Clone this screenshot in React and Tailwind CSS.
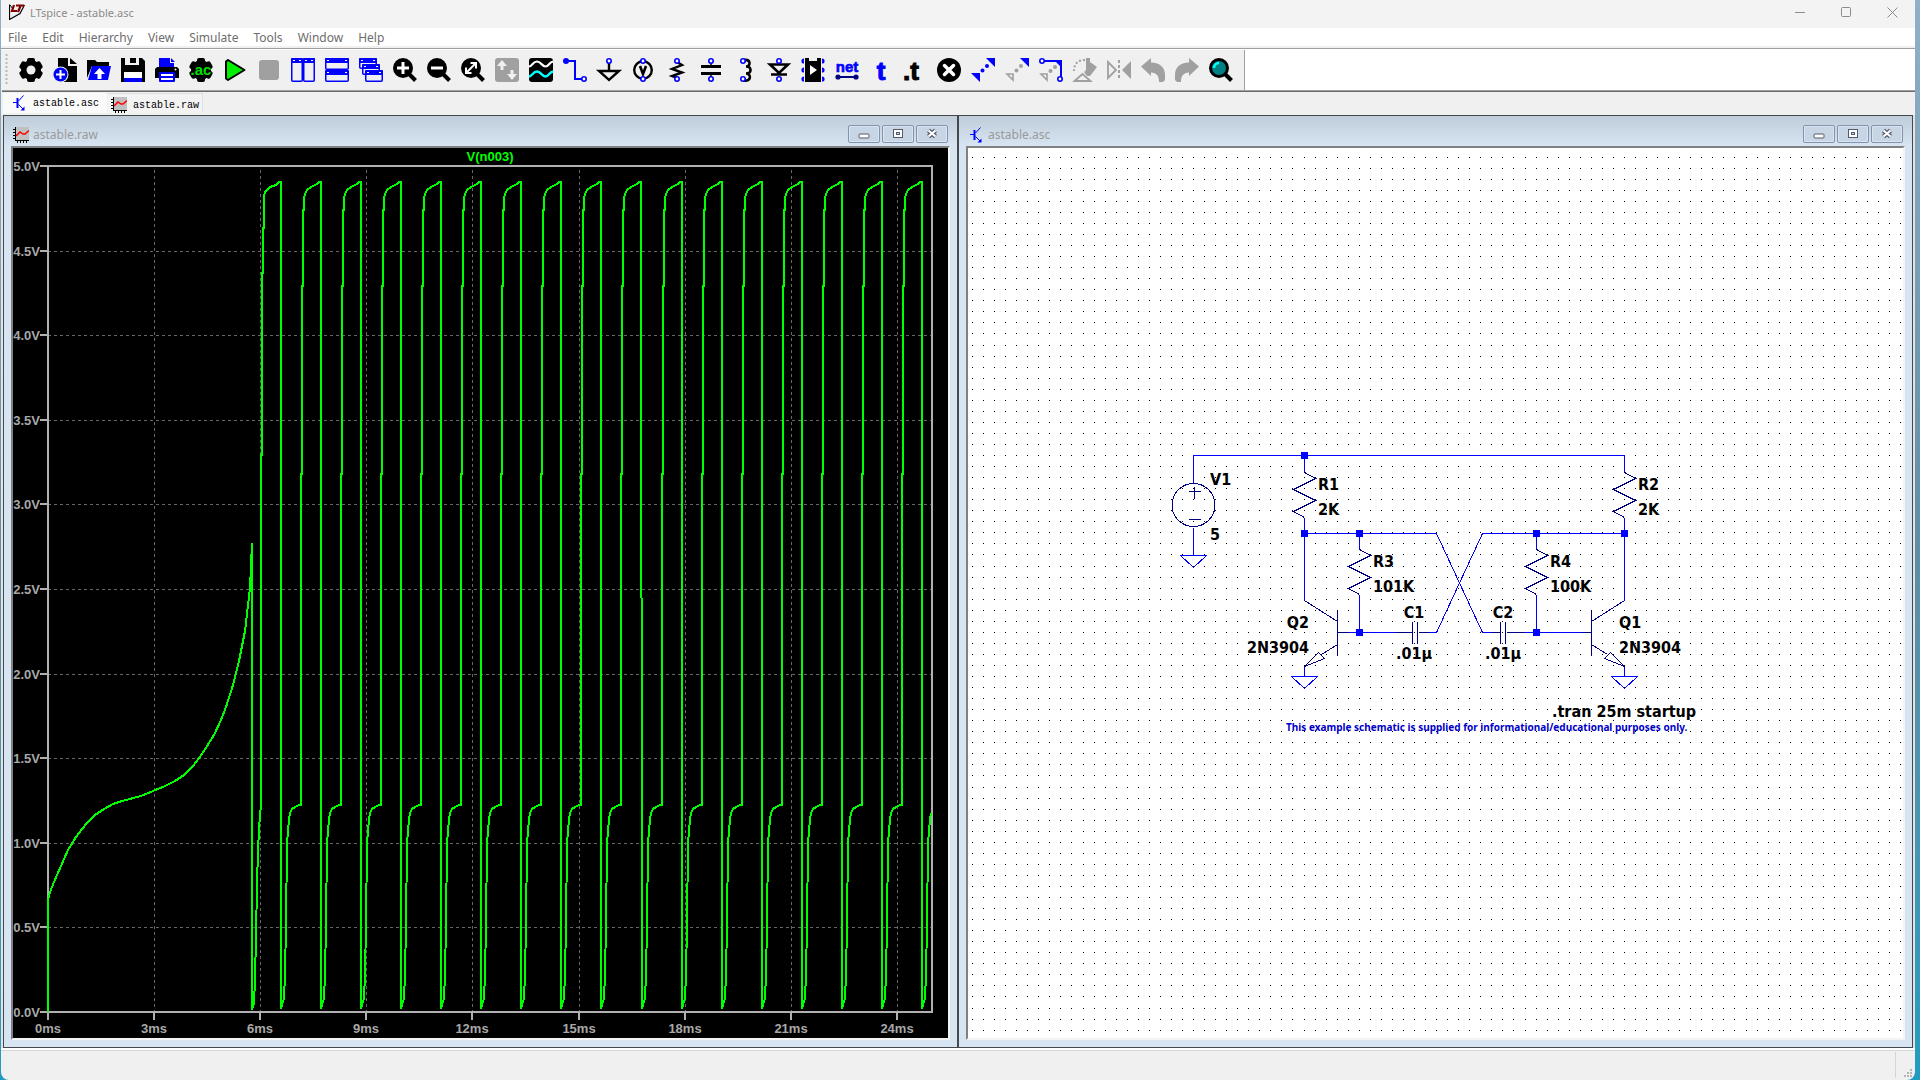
import React, { useState } from 'react';

const BLUE = '#0000ff';
const NAVY = '#000080';
const GREY = '#a0a0a0';

const MENUS = ['File', 'Edit', 'Hierarchy', 'View', 'Simulate', 'Tools', 'Window', 'Help'];

const Gear = () => (
  <g>
    <circle cx="12" cy="12" r="10" />
    <rect x="8" y="0" width="8" height="24" rx="2" />
    <rect x="8" y="0" width="8" height="24" rx="2" transform="rotate(60 12 12)" />
    <rect x="8" y="0" width="8" height="24" rx="2" transform="rotate(120 12 12)" />
  </g>
);

const Magnifier = ({ children }) => (
  <g>
    <path d="M16 16 L22.5 22.5" stroke="#000" strokeWidth="4" />
    <circle cx="10" cy="10" r="10" />
    {children}
  </g>
);

const Pin = ({ x, y }) => <circle cx={x} cy={y} r="2.2" fill="#fff" stroke={BLUE} strokeWidth="1.6" />;

const MiniWindow = ({ x, y, w, h }) => (
  <g>
    <rect x={x + 0.75} y={y + 0.75} width={w - 1.5} height={h - 1.5} rx="1" fill="#f0f0f0" stroke={BLUE} strokeWidth="1.5" />
    <rect x={x} y={y} width={w} height="5" rx="1" fill={BLUE} />
    <path d={`M${x + 2} ${y + 2.5}h2M${x + w - 4} ${y + 2.5}h2`} stroke="#fff" />
  </g>
);

const TOOLS = [
  ['Settings', <><Gear /><circle cx="12" cy="12" r="4.5" fill="#f0f0f0" /></>],
  ['New schematic', <>
    <path d="M5 0h10v8h9v16H5z" />
    <path d="M17 0l7 6h-7z" />
    <circle cx="7.5" cy="16.5" r="8" fill="#f0f0f0" />
    <circle cx="7.5" cy="16.5" r="7" fill={BLUE} />
    <path d="M7.5 12v9M3 16.5h9" stroke="#fff" strokeWidth="2" />
  </>],
  ['Open', <>
    <path d="M0 2h8l2 2h12v4H5L0 20z" />
    <path d="M5 8h19l-3 14H1z" fill={BLUE} />
    <path d="M12.500 10l5.500 6h-3.500v5h-4v-5H7z" fill="#fff" />
  </>],
  ['Save', <>
    <path d="M0 0h4v7h14V0h3l3 3v21H0z" />
    <path d="M9 0h6v5H9z" />
    <rect x="15" y="0" width="2" height="5" fill="#f0f0f0" />
    <rect x="4" y="1" width="2" height="5" fill="#f0f0f0" />
    <rect x="3" y="14" width="18" height="6" fill="#fff" />
    <rect x="3" y="20" width="18" height="4" fill={BLUE} />
  </>],
  ['Print', <>
    <path d="M4 0h11v5h4v4H4z" fill={BLUE} />
    <path d="M16 0l4 4h-4z" fill={BLUE} />
    <path d="M2 9h20l2 2v9H0v-9z" />
    <circle cx="20.500" cy="11.500" r="1" fill="#fff" />
    <rect x="4" y="14" width="16" height="10" rx="1" fill={BLUE} />
    <rect x="6" y="16" width="12" height="2" fill="#fff" />
    <rect x="6" y="20" width="12" height="2" fill="#fff" />
  </>],
  ['Configure analysis', <>
    <Gear />
    <text x="12" y="17" textAnchor="middle" className="font-['Liberation_Sans'] text-[15px] font-bold" fill="#00e000">.ac</text>
  </>],
  ['Run', <path d="M3 3.500v17l2 1.500L21.500 12 5 2z" fill="#00f000" stroke="#000" strokeWidth="2" strokeLinejoin="round" />],
  ['Stop', <rect x="2" y="2" width="20" height="20" rx="3" fill={GREY} />],
  ['Tile vertically', <><MiniWindow x={0} y={0} w={12} h={24} /><MiniWindow x={12} y={0} w={12} h={24} /></>],
  ['Tile horizontally', <><MiniWindow x={0} y={0} w={24} h={12} /><MiniWindow x={0} y={12} w={24} h={12} /></>],
  ['Cascade', <><MiniWindow x={0} y={0} w={18} h={11} /><MiniWindow x={3} y={6} w={18} h={11} /><MiniWindow x={6} y={12} w={18} h={12} /></>],
  ['Zoom in', <Magnifier><path d="M10 4v12M4 10h12" stroke="#fff" strokeWidth="3" /></Magnifier>],
  ['Zoom out', <Magnifier><path d="M4 10h12" stroke="#fff" strokeWidth="3" /></Magnifier>],
  ['Zoom to fit', <Magnifier><path d="M6 14l8-8M9.500 5H15v5.500M5 9.500V15h5.500" fill="none" stroke="#fff" strokeWidth="2" /></Magnifier>],
  ['Autorange', <>
    <rect width="24" height="24" rx="3" fill={GREY} />
    <path d="M7 2l5 6H8.500v4h-3V8H2zM17 22l-5-6h3.500v-4h3v4H22z" fill="#f0f0f0" />
  </>],
  ['Waveforms', <>
    <rect width="24" height="24" rx="3" />
    <path d="M0 8.500C3 8.500 4 3.500 8 3.500S13 8.500 16.500 8.500 20 4 24 3.500" fill="none" stroke="#fff" strokeWidth="2.200" />
    <path d="M0 18.500C3 18.500 4 13.500 8 13.500S13 18.500 16.500 18.500 20 14 24 13.500" fill="none" stroke="#00ffff" strokeWidth="2.400" />
  </>],
  ['Wire', <>
    <path d="M2 3h10v18h8" fill="none" stroke={BLUE} strokeWidth="2" />
    <circle cx="3" cy="3" r="3" fill={BLUE} />
    <Pin x={21} y={21} />
  </>],
  ['Ground', <>
    <path d="M12 4v9M2 13h20L12 22z" fill="none" stroke="#000" strokeWidth="2.400" />
    <Pin x={12} y={3} />
  </>],
  ['Voltage source', <>
    <circle cx="12" cy="12" r="8.800" fill="none" stroke="#000" strokeWidth="2.400" />
    <path d="M9 8l3 8 3-8" fill="none" stroke="#000" strokeWidth="2.600" />
    <Pin x={12} y={3} /><Pin x={12} y={21} />
  </>],
  ['Resistor', <>
    <path d="M12 4l5 3-10 4 10 3.500-10 3.500 5 2" fill="none" stroke="#000" strokeWidth="2.400" />
    <Pin x={12} y={3} /><Pin x={12} y={21} />
  </>],
  ['Capacitor', <>
    <path d="M2 8.500h20M2 15.500h20" stroke="#000" strokeWidth="3" />
    <path d="M12 4v4M12 16v4" stroke="#000" strokeWidth="1.500" />
    <Pin x={12} y={3} /><Pin x={12} y={21} />
  </>],
  ['Inductor', <>
    <path d="M11 2c7-1 7 6.500 2 6.500 6 0 6 7 0 7 5 0 6 8-2 7" fill="none" stroke="#000" strokeWidth="2.600" />
    <Pin x={10} y={3} /><Pin x={10} y={21} />
  </>],
  ['Diode', <>
    <path d="M3 6.500h18L12 15zM4 16.500h16" fill="none" stroke="#000" strokeWidth="2.600" />
    <Pin x={12} y={3} /><Pin x={12} y={21} />
  </>],
  ['Component', <>
    <path d="M4 0h4v3h8V0h4v24H4z" />
    <path d="M9 7v10l7-5z" fill="#fff" />
    <path d="M3 1.500a1.500 1.500 0 0 0 0 3M3 10.500a1.500 1.500 0 0 0 0 3M3 19.500a1.500 1.500 0 0 0 0 3M21 1.500a1.500 1.500 0 0 1 0 3M21 10.500a1.500 1.500 0 0 1 0 3M21 19.500a1.500 1.500 0 0 1 0 3" fill="none" stroke={BLUE} strokeWidth="2.200" />
  </>],
  ['Net name', <>
    <text x="12" y="14" textAnchor="middle" className="font-['Liberation_Sans'] text-[15px] font-bold" fill={BLUE} stroke={BLUE} strokeWidth=".6">net</text>
    <path d="M3 19h18" stroke={NAVY} strokeWidth="2" />
    <circle cx="3" cy="19" r="2.600" fill={NAVY} /><circle cx="21" cy="19" r="2.600" fill={NAVY} />
  </>],
  ['Text', <text x="12" y="22" textAnchor="middle" className="font-['Liberation_Sans'] text-[26px] font-bold" fill={BLUE} stroke={BLUE}>t</text>],
  ['SPICE directive', <text x="8" y="22" textAnchor="middle" className="font-['Liberation_Sans'] text-[26px] font-bold" stroke="#000">.t</text>],
  ['Delete', <><circle cx="12" cy="12" r="12" /><path d="M7.500 7.500l9 9M16.500 7.500l-9 9" stroke="#fff" strokeWidth="3.500" strokeLinecap="round" /></>],
  ['Move', <>
    <path d="M15 0h9v9zM0 15h9v9z" fill={BLUE} />
    <circle cx="16" cy="8" r="2" fill={BLUE} /><circle cx="11.500" cy="12.500" r="2" fill={BLUE} />
  </>],
  ['Drag', <>
    <path d="M15 0h9v9z" fill={BLUE} />
    <path d="M2 16h6v6z" fill="none" stroke={GREY} strokeWidth="1.600" />
    <circle cx="16" cy="8" r="2" fill={GREY} /><circle cx="11.500" cy="12.500" r="2" fill={GREY} />
  </>],
  ['Stretch', <>
    <path d="M4 3h18v16" fill="none" stroke={BLUE} strokeWidth="2" />
    <path d="M15 2h8v8z" fill={BLUE} />
    <path d="M2 16h6v6z" fill="none" stroke={GREY} strokeWidth="1.600" />
    <circle cx="16" cy="9" r="2" fill={GREY} /><circle cx="11.500" cy="13" r="2" fill={GREY} />
    <Pin x={3} y={3} /><Pin x={21} y={21} />
  </>],
  ['Rotate', <>
    <path d="M12 2C5 2 1 6 1 13" fill="none" stroke={GREY} strokeWidth="2" strokeDasharray="2 2" />
    <path d="M13 0h4v4l7 5-7 9h-3l-3-4 2-2z" fill={GREY} />
    <path d="M1.500 23L9.500 16l8 7z" fill="#f0f0f0" stroke={GREY} strokeWidth="1.800" />
  </>],
  ['Mirror', <>
    <path d="M1 4v16l8-8z" fill="none" stroke={GREY} strokeWidth="1.800" />
    <path d="M12 2v20" stroke={GREY} strokeWidth="2" strokeDasharray="3 2" />
    <path d="M24 3v18l-9-9z" fill={GREY} />
  </>],
  ['Undo', <path d="M0 8.500L10 0v4.500C19 5 24 9 24 17v5l-2 2h-4c0-6-2-9-8-9.500V18z" fill={GREY} />],
  ['Redo', <path d="M24 8.500L14 0v4.500C5 5 0 9 0 17v5l2 2h4c0-6 2-9 8-9.500V18z" fill={GREY} />],
  ['Find', <>
    <path d="M16 16l6.500 6.500" stroke="#000" strokeWidth="4" />
    <circle cx="10" cy="10" r="8.500" fill="#008080" stroke="#000" strokeWidth="3" />
    <path d="M5 10a5 5 0 0 1 5-5" fill="none" stroke="#00ffff" strokeWidth="2.500" />
  </>],
];

const SchematicIcon = () => (
  <svg className="size-4 shrink-0" viewBox="0 0 16 16" fill="none" stroke={BLUE}>
    <path d="M2 7.500h4M7.500 6L12.500 .5M7.500 9.500L12 14" />
    <path d="M6.500 3v10" strokeWidth="2" />
    <path d="M13.500 15.500v-4l-4 4z" fill={BLUE} stroke="none" />
  </svg>
);

const PlotIcon = () => (
  <svg className="size-4 shrink-0" viewBox="0 0 16 16" fill="none">
    <rect x="3" width="13" height="13" fill="#c0c0c0" />
    <path d="M2.500 0v14M2 13.500h14M0 2.500h2M0 5.500h2M0 8.500h2M0 11.500h2M4.500 14v2M7.500 14v2M10.500 14v2M13.500 14v2" stroke="#000" />
    <path d="M3 9l4-4 3 2h2l4-3.500" stroke="#f00" strokeWidth="1.500" />
  </svg>
);

const TitleBar = () => (
  <header className="flex h-7 items-start bg-[#f3f3f3]">
    <svg className="ml-2 mt-1 size-4" viewBox="0 0 16 16" fill="none">
      <path d="M.5 .5v15L11 9.500 15.500 1" stroke="#000" strokeWidth="1.200" />
      <path d="M1 1l3 4" stroke="#000" />
      <path d="M5 1L3 7h5M7 1.500h8M11.500 2L9 8" stroke="#800000" strokeWidth="2.200" />
    </svg>
    <h1 className="ml-[5px] text-[11px] leading-[25px] text-[#8b8b8b]">LTspice - astable.asc</h1>
    <div className="ml-auto flex text-[#8b8b8b]">
      <button aria-label="Minimize" className="flex h-6 w-[46px] items-center justify-center">
        <svg className="size-[11px]" viewBox="0 0 11 11" stroke="currentColor"><path d="M0 5.500h10" /></svg>
      </button>
      <button aria-label="Maximize" className="flex h-6 w-[46px] items-center justify-center">
        <svg className="size-[11px]" viewBox="0 0 11 11" fill="none" stroke="currentColor"><rect x=".5" y=".5" width="9" height="9" rx="1" /></svg>
      </button>
      <button aria-label="Close" className="flex h-6 w-[46px] items-center justify-center">
        <svg className="size-[11px]" viewBox="0 0 11 11" stroke="currentColor"><path d="M.5 .5l10 10M10.500 .5l-10 10" /></svg>
      </button>
    </div>
  </header>
);

const Toolbar = () => (
  <div className="flex h-10 bg-white">
    <div role="toolbar" className="flex items-center border-r border-[#a0a0a0] bg-[#f0f0f0] pr-[6px]">
      <svg className="ml-1 mr-[6px] h-8 w-[3px]" viewBox="0 0 3 32">
        <path d="M1.500 0v32" stroke="#b8b8b8" strokeWidth="2" strokeDasharray="2 2" />
      </svg>
      {TOOLS.map(([label, art]) => (
        <button key={label} aria-label={label} className="flex h-[34px] w-[34px] items-center justify-center">
          <svg className="size-6 overflow-visible" viewBox="0 0 24 24">{art}</svg>
        </button>
      ))}
    </div>
  </div>
);

const paneButton = 'flex h-[18px] w-8 items-center justify-center rounded-[2px] border border-[#8393ad] bg-[#c7d5e5] shadow-[inset_0_0_0_1px_#d9e5f2]';

const Pane = ({ icon, title, children }) => (
  <section className="flex min-w-0 flex-1 flex-col border border-[#45484c] bg-[#d7e4f2] px-[7px] pb-[7px]">
    <div className="-mx-[7px] flex h-[30px] shrink-0 items-end gap-1 bg-linear-to-b from-[#bfcddb] to-[#d7e4f2] px-[9px] pb-[3px]">
      {icon}
      <h2 className="text-xs text-[#9a9a9a]">{title}</h2>
      <div className="ml-auto flex gap-[2px]">
        <button aria-label="Minimize pane" className={paneButton}>
          <svg className="size-3" viewBox="0 0 12 12"><rect x="1" y="6" width="10" height="4" rx="1" fill="#fff" stroke="#535a6b" /></svg>
        </button>
        <button aria-label="Maximize pane" className={paneButton}>
          <svg className="size-3" viewBox="0 0 12 12" stroke="#535a6b">
            <rect x="1.500" y="1.500" width="9" height="8" fill="#fff" />
            <rect x="4.500" y="4.500" width="3" height="2" fill="#c7d5e5" />
          </svg>
        </button>
        <button aria-label="Close pane" className={paneButton}>
          <svg className="size-3" viewBox="0 0 12 12">
            <path d="M2.500 2.500l7 6M9.500 2.500l-7 6" stroke="#535a6b" strokeWidth="4.500" />
            <path d="M2.500 2.500l7 6M9.500 2.500l-7 6" stroke="#fff" strokeWidth="2.200" />
          </svg>
        </button>
      </div>
    </div>
    <div className="flex min-h-0 flex-1 border-2 border-b-[#f4f4f4] border-l-[#808080] border-r-[#f4f4f4] border-t-[#808080]">
      {children}
    </div>
  </section>
);

// plot area in drawing units
const LEFT = 48;
const RIGHT = 932;
const TOP = 166;
const BOTTOM = 1012;

const VOLTS = ['0.0V', '0.5V', '1.0V', '1.5V', '2.0V', '2.5V', '3.0V', '3.5V', '4.0V', '4.5V', '5.0V'];
const TIMES = ['0ms', '3ms', '6ms', '9ms', '12ms', '15ms', '18ms', '21ms', '24ms'];

const voltY = (i) => Math.round(BOTTOM - i * 84.6);
const timeX = (i) => Math.round(LEFT + i * 106.1);

const STARTUP = [
  [48, 1012], [48, 900], [50, 892], [54, 882], [61, 866], [68, 850], [76, 837], [86, 824], [95, 815], [104, 809],
  [113, 804], [122, 801], [141, 796], [153, 791], [165, 786], [175, 781], [184, 775], [193, 766], [202, 754],
  [214, 735], [221, 720], [226, 707], [233, 685], [239, 661], [245, 631], [250, 588], [252, 543], [252, 1010],
  [253, 1006], [254, 1003], [255, 980], [256, 935], [257, 885], [258, 850], [259, 830], [260, 815], [261, 805],
  [261, 455], [262, 455], [262, 273], [263, 273], [263, 228], [264, 228], [264, 196], [265, 192], [270, 187],
  [276, 185], [279, 182], [281, 182],
];

// one oscillation, x counted from the falling edge
const CYCLE = [
  [0, 1009], [1, 1005], [3, 998], [4, 975], [5, 923], [6, 845], [7, 830], [8, 820], [9, 813], [11, 809], [14, 807],
  [18, 805], [20, 805], [20, 474], [21, 474], [21, 286], [22, 286], [22, 210], [23, 210], [23, 198], [24, 194],
  [26, 190], [30, 187], [36, 184], [38, 182], [40, 182],
];

const trace = () => {
  const points = [...STARTUP];
  for (let n = 0; n < 17; n++) {
    const x0 = Math.round(281 + n * 40.06);
    CYCLE.forEach(([dx, y]) => {
      if (x0 + dx <= RIGHT) points.push([x0 + dx, y]);
    });
  }
  return points.map((p) => p.join(',')).join(' ');
};

const Plot = () => (
  <svg className="h-full w-full bg-black" viewBox="13 148 935 890" preserveAspectRatio="none">
    <g stroke="#666" strokeDasharray="3 3" shapeRendering="crispEdges">
      {VOLTS.slice(1, -1).map((v, i) => <path key={v} d={`M${LEFT} ${voltY(i + 1) + 0.5}H${RIGHT}`} />)}
      {TIMES.slice(1).map((t, i) => <path key={t} d={`M${timeX(i + 1) + 0.5} ${TOP + 4}V${BOTTOM}`} />)}
    </g>
    <g fill="none" stroke="#b0b0b0" strokeWidth="2" shapeRendering="crispEdges">
      <rect x={LEFT} y={TOP} width={RIGHT - LEFT} height={BOTTOM - TOP} />
      {VOLTS.map((v, i) => <path key={v} d={`M40 ${voltY(i)}H${LEFT}`} />)}
      {TIMES.map((t, i) => <path key={t} d={`M${timeX(i)} ${BOTTOM}v8`} />)}
    </g>
    <g className="font-['Liberation_Sans'] text-[13px] font-bold" fill="#a8a8a8">
      {VOLTS.map((v, i) => <text key={v} x="40" y={voltY(i) + 5} textAnchor="end">{v}</text>)}
      {TIMES.map((t, i) => <text key={t} x={timeX(i)} y="1033" textAnchor="middle">{t}</text>)}
    </g>
    <text x="490" y="161" textAnchor="middle" className="font-['Liberation_Sans'] text-[13px] font-bold" fill="#00ff00">V(n003)</text>
    <polyline points={trace()} fill="none" stroke="#00ff00" strokeWidth="2" shapeRendering="crispEdges" />
  </svg>
);

const gridDots = () => {
  let d = '';
  for (let row = -27; row <= 52; row++) {
    for (let col = -20; col <= 64; col++) {
      d += `M${Math.round(1193 + col * 11.05)} ${Math.round(455 + row * 11.05)}h1v1h-1z`;
    }
  }
  return d;
};

const Resistor = ({ x, y }) => <path d={`M${x} ${y}l11 6l-22 11l22 11l-22 11l11 6`} stroke={NAVY} />;
const Ground = ({ x, y }) => <path d={`M${x - 13} ${y}h26l-13 12z`} />;
const Transistor = ({ x, dir }) => (
  <path
    stroke={NAVY}
    d={`M${x} 610v45M${x} 621l${33 * dir} -21M${x} 644l${16 * dir} 10M${x + 19 * dir} 652l${-6 * dir} 6l${20 * dir} 8z`}
  />
);

const NODES = [[1304, 455], [1304, 533], [1359, 533], [1536, 533], [1624, 533], [1359, 632], [1536, 632]];

const LABELS = [
  [1210, 485, 'V1'], [1210, 540, '5'],
  [1318, 490, 'R1'], [1318, 515, '2K'],
  [1638, 490, 'R2'], [1638, 515, '2K'],
  [1373, 567, 'R3'], [1373, 592, '101K'],
  [1550, 567, 'R4'], [1550, 592, '100K'],
  [1309, 628, 'Q2', 'end'], [1309, 653, '2N3904', 'end'],
  [1619, 628, 'Q1'], [1619, 653, '2N3904'],
  [1414, 618, 'C1', 'middle'], [1414, 659, '.01µ', 'middle'],
  [1503, 618, 'C2', 'middle'], [1503, 659, '.01µ', 'middle'],
  [1552, 717, '.tran 25m startup'],
];

const Schematic = () => (
  <svg className="h-full w-full bg-white" viewBox="968 148 935 890" preserveAspectRatio="none">
    <path d={gridDots()} fill="#000" shapeRendering="crispEdges" />
    <g transform="translate(0.5 0.5)" fill="none" stroke={BLUE} shapeRendering="crispEdges">
      <path d="M1193 483V455H1624V472M1304 455v17M1304 517v83M1304 533H1436L1482 632H1500M1624 517v83M1624 533H1482L1436 632H1418" />
      <path d="M1359 533v16M1359 594v38M1536 533v16M1536 594v38M1337 632H1412M1506 632H1591M1193 527v28M1304 666v10M1624 666v10" />
      <circle cx="1193" cy="504.500" r="21.500" stroke={NAVY} />
      <path d="M1188 491h12M1194 486v12M1188 519h12" stroke={NAVY} />
      <path d="M1412 621v22M1417 621v22M1500 621v22M1505 621v22" stroke={NAVY} />
      <path d="M1337 632h11M1394 632h18M1418 632h10M1490 632h10M1506 632h18M1581 632h10" stroke={NAVY} />
      <Resistor x={1304} y={472} />
      <Resistor x={1624} y={472} />
      <Resistor x={1359} y={549} />
      <Resistor x={1536} y={549} />
      <Transistor x={1337} dir={-1} />
      <Transistor x={1591} dir={1} />
      <Ground x={1193} y={555} />
      <Ground x={1304} y={676} />
      <Ground x={1624} y={676} />
    </g>
    {NODES.map(([x, y]) => <rect key={`${x}-${y}`} x={x - 3} y={y - 3} width="7" height="7" fill={BLUE} />)}
    <g className="font-['DejaVu_Sans_Condensed','Noto_Sans',sans-serif] text-[16px] font-bold">
      {LABELS.map(([x, y, text, anchor]) => <text key={`${x}-${y}`} x={x} y={y} textAnchor={anchor}>{text}</text>)}
    </g>
    <text x="1286" y="731" className="font-['Noto_Sans',sans-serif] text-[10px] font-bold" fill="#0000c8">
      This example schematic is supplied for informational/educational purposes only.
    </text>
  </svg>
);

export default function App() {
  const [tab, setTab] = useState('asc');

  return (
    <div className="h-screen bg-linear-to-b from-[#8fb0c8] via-[#5f8ea6] to-[#1f9cc0] pl-px pr-[5px] font-['Noto_Sans',sans-serif]">
      <div className="flex h-full flex-col overflow-hidden rounded-b-lg bg-[#f0f0f0]">
        <TitleBar />
        <nav className="flex h-[18px] items-center gap-[15px] bg-white pl-[7px] pt-[2px] text-xs text-[#6d6d6d]">
          {MENUS.map((m) => <button key={m}>{m}</button>)}
        </nav>
        <div className="mt-[2px] border-b border-b-white border-t border-t-[#a0a0a0]" />
        <Toolbar />
        <div className="ml-px h-[2px] shrink-0 border-b border-t border-b-[#696969] border-t-[#a0a0a0]" />
        <div role="tablist" className="flex h-[23px] shrink-0 items-end px-[2px] pb-[2px] font-['Liberation_Mono',monospace] text-[10px] text-black">
          <button role="tab" aria-selected={tab === 'asc'} onClick={() => setTab('asc')} className="flex h-5 w-[104px] items-center gap-[6px] bg-[#fafafa] pl-2">
            <SchematicIcon />astable.asc
          </button>
          <button role="tab" aria-selected={tab === 'raw'} onClick={() => setTab('raw')} className="flex h-5 w-24 items-center gap-[6px] border-r border-t border-[#e0e0e0] bg-[#f3f3f3] pl-1 pt-[3px]">
            <PlotIcon />astable.raw
          </button>
        </div>
        <main className="flex min-h-0 flex-1 bg-[#e3e3e3] px-[2px]">
          <Pane icon={<PlotIcon />} title="astable.raw"><Plot /></Pane>
          <Pane icon={<SchematicIcon />} title="astable.asc"><Schematic /></Pane>
        </main>
        <footer className="flex h-8 shrink-0 items-stretch border-t-2 border-white">
          <div className="flex flex-1 items-end justify-end border-t border-[#d7d7d7]">
            <div className="mb-[2px] h-[26px] w-px bg-[#d4d4d4]" />
            <svg className="mb-[2px] ml-2 mr-[2px] size-[9px]" viewBox="0 0 9 9" fill="#b4b4b4">
              <path d="M6 0h2v2H6zM3 3h2v2H3zM6 3h2v2H6zM0 6h2v2H0zM3 6h2v2H3zM6 6h2v2H6z" />
            </svg>
          </div>
        </footer>
      </div>
    </div>
  );
}
